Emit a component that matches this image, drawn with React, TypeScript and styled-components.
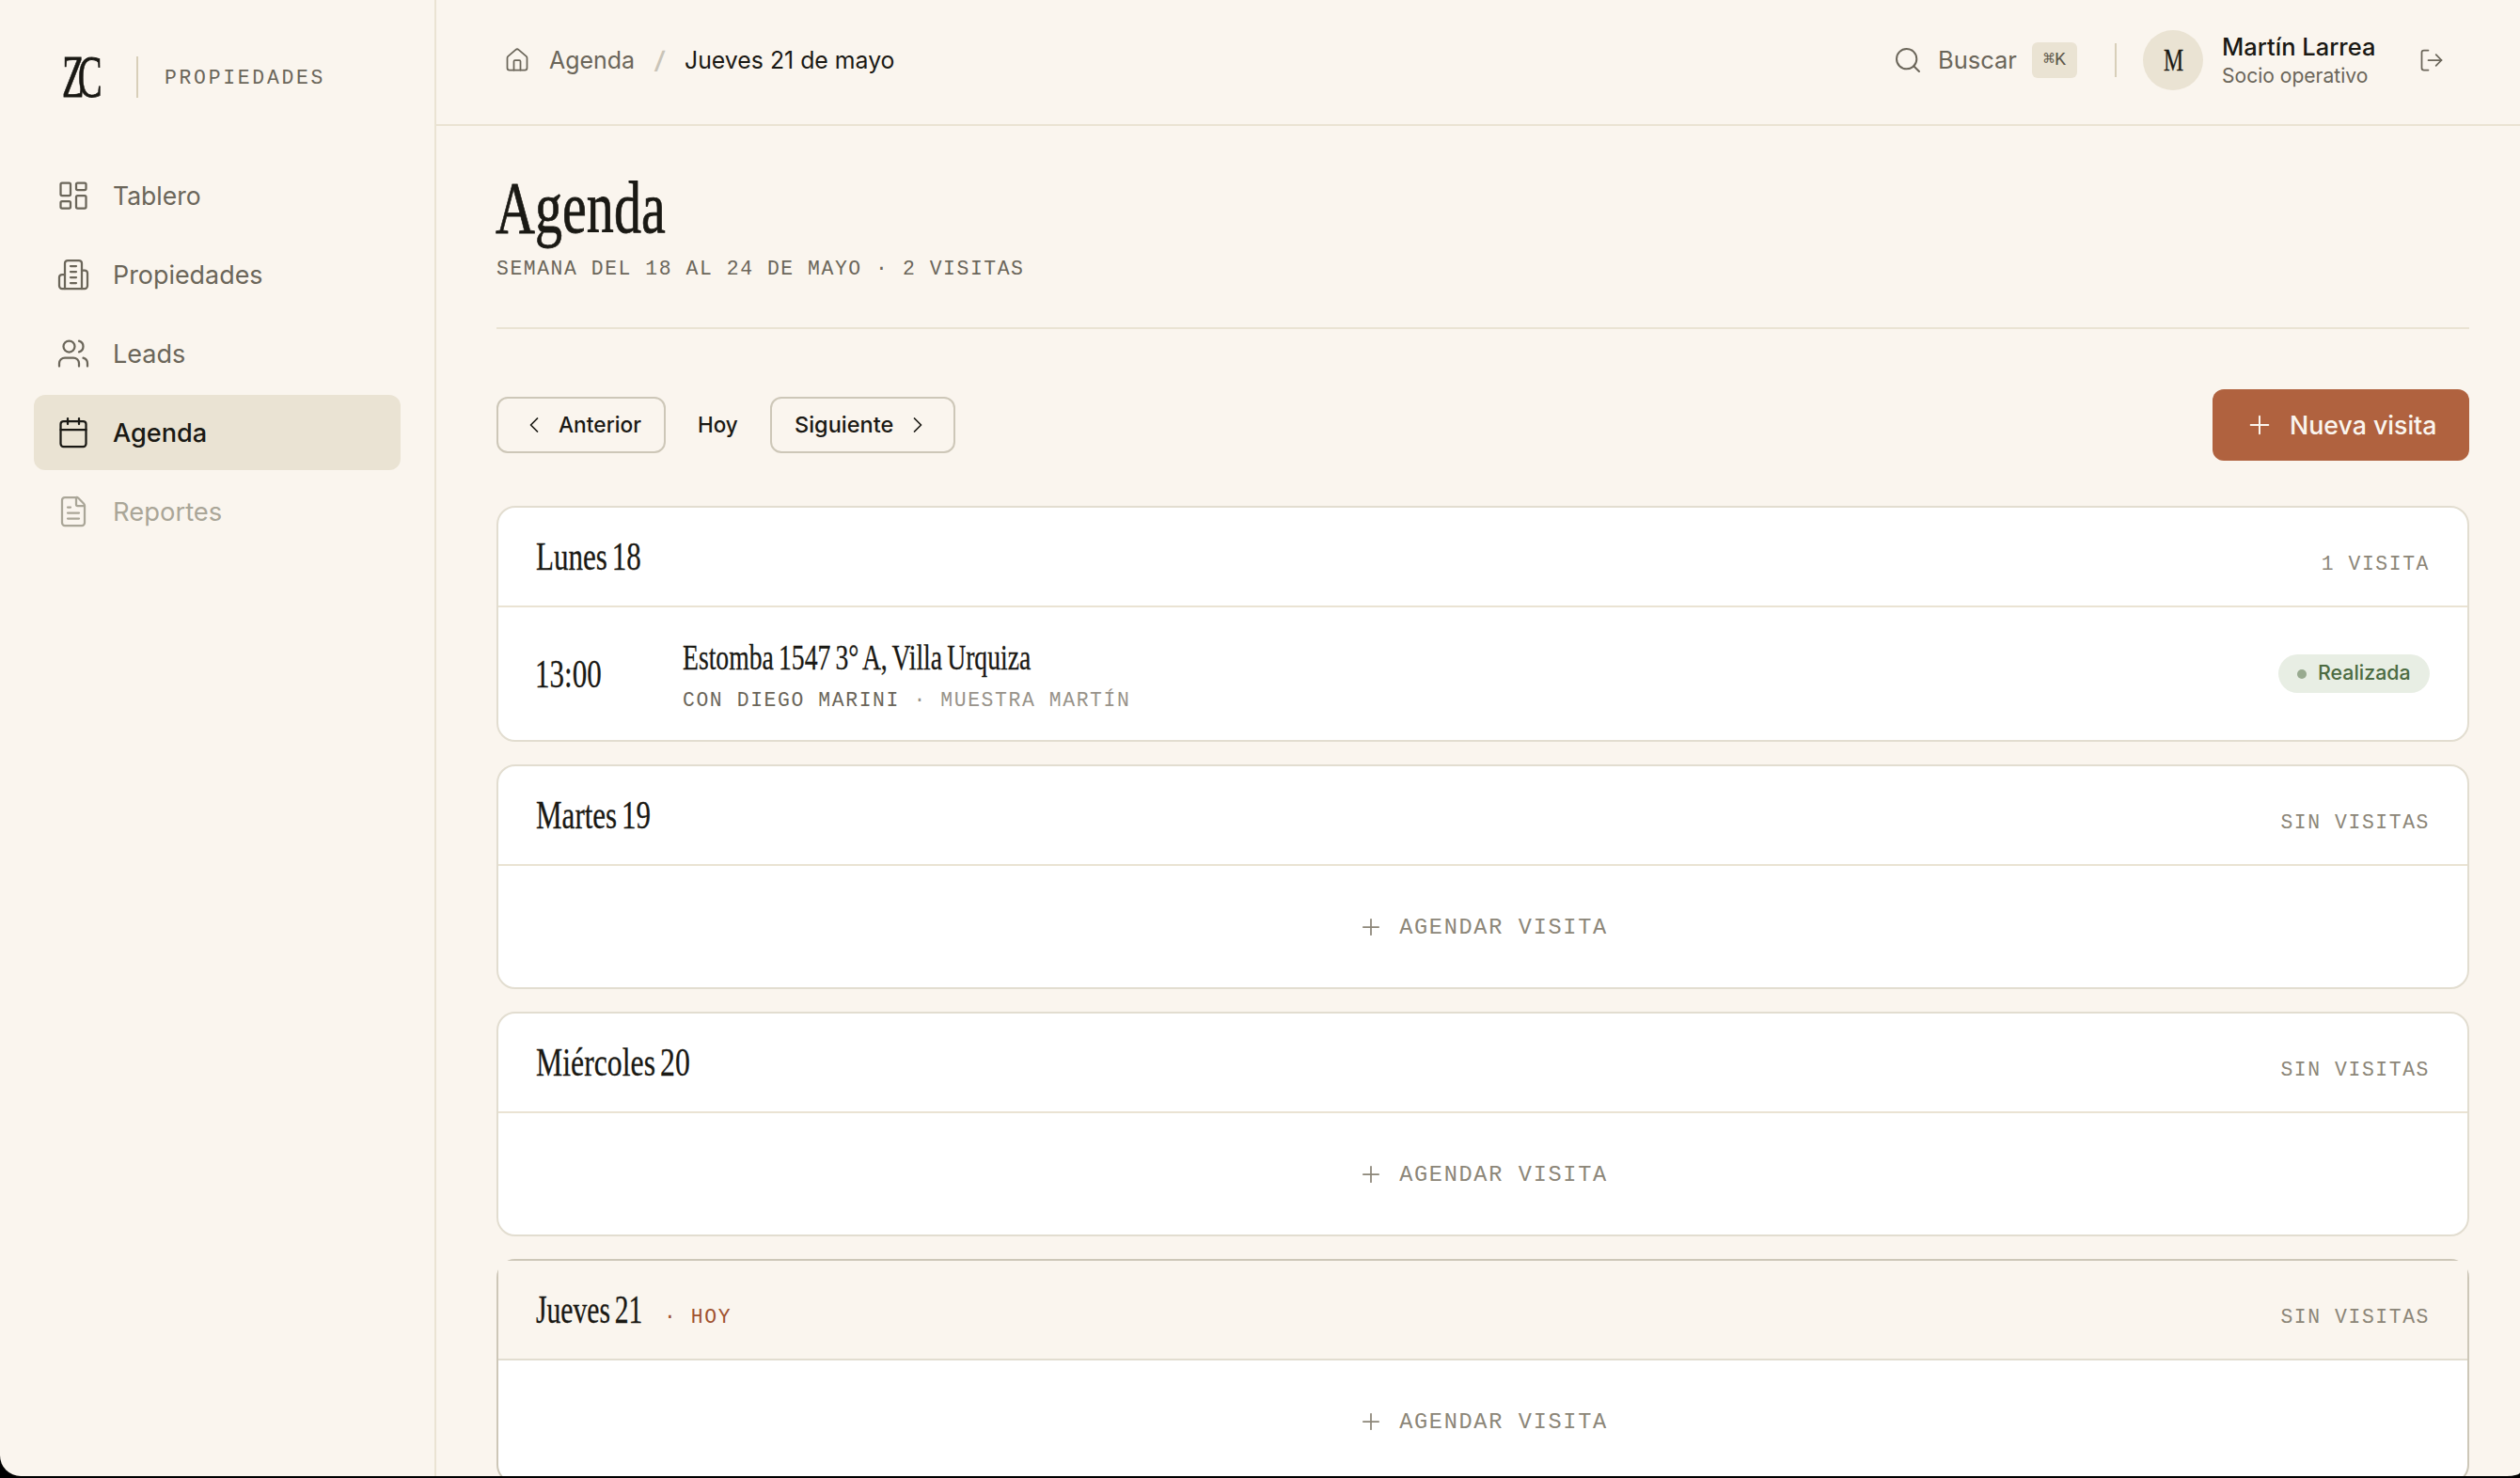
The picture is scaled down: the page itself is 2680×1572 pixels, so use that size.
import React, { useLayoutEffect, useRef, useState } from "react";
import styled, { createGlobalStyle, css } from "styled-components";
import {
  Calendar,
  ChevronLeft,
  ChevronRight,
  FileText,
  House,
  LayoutDashboard,
  LogOut,
  Plus,
  Search,
  Users,
} from "lucide-react";

const c = {
  paper: "#faf5ee",
  sand: "#eae3d3",
  line: "#e2ddd0",
  edge: "#cdc7b8",
  ink: "#1a1914",
  soft: "#6b665a",
  muted: "#8c8678",
  faint: "#aaa698",
  clay: "#b0623f",
};

const sans = css`
  font-family: Inter, "Liberation Sans", sans-serif;
`;
const serif = css`
  font-family: "Liberation Serif", "Times New Roman", serif;
`;
const mono = css`
  font-family: "Liberation Mono", "DejaVu Sans Mono", monospace;
`;

const Global = createGlobalStyle`
  * { box-sizing: border-box; }
  html, body { margin: 0; background: #000; overflow: hidden; }
  button { font: inherit; color: inherit; background: none; border: 0; padding: 0; margin: 0; }
  h1, h2, p { margin: 0; font-weight: 400; }
  svg { flex: none; display: block; }
`;

/* Condensed text: squeezes its glyphs horizontally to the set measure. */
const FitBox = styled.span<{ $w: number }>`
  display: inline-block;
  width: ${(p) => p.$w}px;
  flex: none;
  white-space: nowrap;
`;
const FitInner = styled.span`
  display: inline-block;
  transform-origin: 0 50%;
`;
function Fit({ w, children }: { w: number; children: React.ReactNode }) {
  const ref = useRef<HTMLSpanElement>(null);
  const [scale, setScale] = useState(1);
  useLayoutEffect(() => {
    if (ref.current && ref.current.offsetWidth) setScale(w / ref.current.offsetWidth);
  }, [w]);
  return (
    <FitBox $w={w}>
      <FitInner ref={ref} style={{ transform: `scaleX(${scale})` }}>
        {children}
      </FitInner>
    </FitBox>
  );
}

const Shell = styled.div`
  ${sans}
  display: grid;
  grid-template-columns: 464px 1fr;
  width: 2680px;
  height: 1570px;
  overflow: hidden;
  background: ${c.paper};
  color: ${c.ink};
  border-radius: 0 0 14px 22px / 0 0 4px 22px;
`;

const Sidebar = styled.aside`
  border-right: 2px solid ${c.sand};
  padding: 0 36px;
`;
const Brand = styled.div`
  display: flex;
  align-items: center;
  height: 168px;
  padding: 0 0 4px 30px;
`;
const Monogram = styled.div`
  ${serif}
  font-size: 64px;
  line-height: 64px;
  letter-spacing: -11.5px;
  width: 79px;
  height: 64px;
  white-space: nowrap;
  transform: scaleX(0.605);
  transform-origin: 0 50%;
  -webkit-text-stroke: 0.8px ${c.ink};
`;
const BrandRule = styled.div`
  width: 2px;
  height: 44px;
  margin-right: 28px;
  background: #d8cfb9;
`;
const BrandWord = styled.span`
  ${mono}
  padding-top: 2px;
  font-size: 21.4px;
  letter-spacing: 2.72px;
  color: ${c.soft};
`;
const Nav = styled.nav`
  display: flex;
  flex-direction: column;
  gap: 4px;
`;
const NavItem = styled.a<{ $state?: "active" | "off" }>`
  display: flex;
  align-items: center;
  gap: 24px;
  height: 80px;
  padding: 0 24px;
  border-radius: 12px;
  font-size: 27.4px;
  line-height: 40px;
  font-weight: ${(p) => (p.$state === "active" ? 500 : 400)};
  color: ${(p) => (p.$state === "active" ? c.ink : p.$state === "off" ? c.faint : c.soft)};
  background: ${(p) => (p.$state === "active" ? c.sand : "transparent")};
`;

const Main = styled.main`
  min-width: 0;
`;
const Topbar = styled.header`
  display: flex;
  align-items: center;
  justify-content: space-between;
  height: 134px;
  padding: 0 80px 4px 72px;
  border-bottom: 2px solid ${c.sand};
  font-size: 25.5px;
  line-height: 36px;
`;
const Group = styled.div<{ $gap: number }>`
  display: flex;
  align-items: center;
  gap: ${(p) => p.$gap}px;
  color: ${c.soft};
`;
const Slash = styled.span`
  color: #c9c4b8;
`;
const Current = styled.span`
  color: ${c.ink};
`;
const Kbd = styled.kbd`
  ${mono}
  display: flex;
  align-items: center;
  justify-content: center;
  width: 48px;
  height: 38px;
  border-radius: 6px;
  background: ${c.sand};
  font-size: 20px;
  line-height: 38px;
  color: #5f594c;
`;
const TopRule = styled.div`
  width: 2px;
  height: 36px;
  margin: 0 28px 0 40px;
  background: #d8cfb9;
`;
const Avatar = styled.div`
  ${serif}
  display: flex;
  align-items: center;
  justify-content: center;
  width: 64px;
  height: 64px;
  margin-right: 20px;
  border-radius: 50%;
  background: ${c.sand};
  font-size: 34px;
  line-height: 64px;
  color: ${c.ink};
  -webkit-text-stroke: 0.3px ${c.ink};
`;
const Person = styled.div`
  display: flex;
  flex-direction: column;
  width: 163px;
  margin-right: 46px;
`;
const PersonName = styled.div`
  height: 32px;
  line-height: 32px;
  font-weight: 500;
  color: ${c.ink};
`;
const PersonRole = styled.div`
  height: 28px;
  font-size: 21.6px;
  line-height: 28px;
`;

const Content = styled.div`
  padding: 0 54px 0 64px;
`;
const Heading = styled.div`
  height: 216px;
  padding-top: 47px;
  border-bottom: 2px solid ${c.sand};
`;
const Title = styled.h1`
  ${serif}
  font-size: 79px;
  line-height: 80px;
  height: 80px;
  margin-left: -1px;
  -webkit-text-stroke: 0.8px ${c.ink};
`;
const Subtitle = styled.p`
  ${mono}
  font-size: 21.4px;
  line-height: 28px;
  margin-top: 11px;
  letter-spacing: 1.56px;
  color: ${c.soft};
`;
const Toolbar = styled.div`
  display: flex;
  align-items: center;
  justify-content: space-between;
  height: 76px;
  margin: 64px 0 48px;
`;
const Pager = styled.div`
  display: flex;
  gap: 16px;
`;
const PagerButton = styled.button<{ $plain?: boolean }>`
  display: flex;
  align-items: center;
  gap: 12px;
  height: 60px;
  padding: 0 ${(p) => (p.$plain ? 16 : 24)}px;
  border: 2px solid ${(p) => (p.$plain ? "transparent" : c.edge)};
  border-radius: 12px;
  font-size: 23.5px;
  font-weight: 500;
  line-height: 32px;
`;
const Primary = styled.button`
  display: flex;
  align-items: center;
  gap: 16px;
  height: 76px;
  padding: 0 34px;
  border-radius: 12px;
  background: ${c.clay};
  color: ${c.paper};
  font-size: 27.4px;
  font-weight: 500;
  line-height: 40px;
`;
const Days = styled.div`
  display: flex;
  flex-direction: column;
  gap: 24px;
`;
const Card = styled.section<{ $today?: boolean }>`
  border: 2px solid ${(p) => (p.$today ? c.edge : c.line)};
  border-radius: 20px;
  background: #fff;
`;
const CardHead = styled.div<{ $today?: boolean }>`
  display: flex;
  align-items: baseline;
  height: 106px;
  padding: 24px 40px;
  border-bottom: 2px solid ${(p) => (p.$today ? c.line : c.sand)};
  background: ${(p) => (p.$today ? c.paper : "transparent")};
`;
const DayName = styled.h2`
  ${serif}
  font-size: 43px;
  line-height: 56px;
  word-spacing: -4px;
  -webkit-text-stroke: 0.3px ${c.ink};
`;
const Tag = styled.span<{ $today?: boolean }>`
  ${mono}
  font-size: 21.4px;
  letter-spacing: 1.58px;
  white-space: pre;
  color: ${(p) => (p.$today ? "#a0522f" : c.muted)};
  margin-left: ${(p) => (p.$today ? "23px" : "auto")};
`;
const AddVisit = styled.button`
  ${mono}
  display: flex;
  align-items: center;
  justify-content: center;
  gap: 16px;
  width: 100%;
  height: 129px;
  font-size: 23.6px;
  letter-spacing: 1.68px;
  color: ${c.muted};
`;
const AddLabel = styled.span`
  padding-top: 2px;
`;
const Visit = styled.div`
  display: flex;
  align-items: center;
  height: 141px;
  padding: 0 40px;
`;
const Hour = styled.div`
  ${serif}
  width: 156px;
  margin-left: -1px;
  font-size: 42px;
  line-height: 56px;
  -webkit-text-stroke: 0.3px ${c.ink};
`;
const VisitBody = styled.div`
  flex: 1;
  padding-left: 1px;
`;
const Place = styled.div`
  ${serif}
  height: 48px;
  font-size: 38px;
  line-height: 48px;
  word-spacing: -2.5px;
  -webkit-text-stroke: 0.3px ${c.ink};
`;
const Meta = styled.div`
  ${mono}
  margin-top: 8px;
  font-size: 21.4px;
  line-height: 28px;
  letter-spacing: 1.6px;
  color: #98938a;
`;
const Client = styled.span`
  color: ${c.soft};
`;
const Badge = styled.div`
  display: flex;
  align-items: center;
  gap: 12px;
  height: 41px;
  padding: 0 20px;
  border-radius: 21px;
  background: #e8eee4;
  color: #4c6b42;
  font-size: 21.6px;
  font-weight: 500;
  line-height: 31px;
`;
const BadgeLabel = styled.span`
  padding-bottom: 2px;
`;
const Dot = styled.i`
  width: 10px;
  height: 10px;
  border-radius: 50%;
  background: #98aa8f;
`;

const BuildingIcon = ({ size, strokeWidth }: { size: number; strokeWidth: number }) => (
  <svg
    width={size}
    height={size}
    viewBox="0 0 24 24"
    fill="none"
    stroke="currentColor"
    strokeWidth={strokeWidth}
    strokeLinecap="round"
    strokeLinejoin="round"
  >
    <path d="M6 22V4a2 2 0 0 1 2-2h8a2 2 0 0 1 2 2v18Z" />
    <path d="M6 12H4a2 2 0 0 0-2 2v6a2 2 0 0 0 2 2h2" />
    <path d="M18 9h2a2 2 0 0 1 2 2v9a2 2 0 0 1-2 2h-2" />
    <path d="M10 6h4M10 10h4M10 14h4M10 18h4" />
  </svg>
);

const nav = [
  { label: "Tablero", w: 94, Icon: LayoutDashboard },
  { label: "Propiedades", w: 160, Icon: BuildingIcon },
  { label: "Leads", w: 77, Icon: Users },
  { label: "Agenda", w: 100, Icon: Calendar, state: "active" as const },
  { label: "Reportes", w: 116, Icon: FileText, state: "off" as const },
];

type Day = { name: string; w: number; count: string; today?: boolean; visit?: boolean };
const days: Day[] = [
  { name: "Lunes 18", w: 112, count: "1 VISITA", visit: true },
  { name: "Martes 19", w: 122, count: "SIN VISITAS" },
  { name: "Miércoles 20", w: 164, count: "SIN VISITAS" },
  { name: "Jueves 21", w: 113, count: "SIN VISITAS", today: true },
];

export default function App() {
  return (
    <>
      <Global />
      <Shell>
        <Sidebar>
          <Brand>
            <Monogram>ZC</Monogram>
            <BrandRule />
            <BrandWord>PROPIEDADES</BrandWord>
          </Brand>
          <Nav>
            {nav.map(({ label, w, Icon, state }) => (
              <NavItem key={label} $state={state}>
                <Icon size={36} strokeWidth={1.5} />
                <Fit w={w}>{label}</Fit>
              </NavItem>
            ))}
          </Nav>
        </Sidebar>
        <Main>
          <Topbar>
            <Group $gap={20}>
              <House size={28} strokeWidth={1.5} />
              <Fit w={91}>Agenda</Fit>
              <Slash>
                <Fit w={13}>/</Fit>
              </Slash>
              <Current>
                <Fit w={224}>Jueves 21 de mayo</Fit>
              </Current>
            </Group>
            <Group $gap={0}>
              <Group $gap={16}>
                <Search size={32} strokeWidth={1.5} />
                <Fit w={84}>Buscar</Fit>
                <Kbd>
                  <Fit w={24}>⌘K</Fit>
                </Kbd>
              </Group>
              <TopRule />
              <Avatar>
                <Fit w={21}>M</Fit>
              </Avatar>
              <Person>
                <PersonName>
                  <Fit w={163}>Martín Larrea</Fit>
                </PersonName>
                <PersonRole>
                  <Fit w={155}>Socio operativo</Fit>
                </PersonRole>
              </Person>
              <LogOut size={28} strokeWidth={1.5} />
            </Group>
          </Topbar>
          <Content>
            <Heading>
              <Title>
                <Fit w={181}>Agenda</Fit>
              </Title>
              <Subtitle>SEMANA DEL 18 AL 24 DE MAYO · 2 VISITAS</Subtitle>
            </Heading>
            <Toolbar>
              <Pager>
                <PagerButton>
                  <ChevronLeft size={28} strokeWidth={1.5} />
                  <Fit w={88}>Anterior</Fit>
                </PagerButton>
                <PagerButton $plain>
                  <Fit w={43}>Hoy</Fit>
                </PagerButton>
                <PagerButton>
                  <Fit w={105}>Siguiente</Fit>
                  <ChevronRight size={28} strokeWidth={1.5} />
                </PagerButton>
              </Pager>
              <Primary>
                <Plus size={32} strokeWidth={1.5} />
                <Fit w={157}>Nueva visita</Fit>
              </Primary>
            </Toolbar>
            <Days>
              {days.map((d) => (
                <Card key={d.name} $today={d.today}>
                  <CardHead $today={d.today}>
                    <DayName>
                      <Fit w={d.w}>{d.name}</Fit>
                    </DayName>
                    {d.today && <Tag $today>· HOY</Tag>}
                    <Tag>{d.count}</Tag>
                  </CardHead>
                  {d.visit ? (
                    <Visit>
                      <Hour>
                        <Fit w={71}>13:00</Fit>
                      </Hour>
                      <VisitBody>
                        <Place>
                          <Fit w={370}>Estomba 1547 3° A, Villa Urquiza</Fit>
                        </Place>
                        <Meta>
                          <Client>CON DIEGO MARINI</Client> · MUESTRA MARTÍN
                        </Meta>
                      </VisitBody>
                      <Badge>
                        <Dot />
                        <BadgeLabel>
                          <Fit w={99}>Realizada</Fit>
                        </BadgeLabel>
                      </Badge>
                    </Visit>
                  ) : (
                    <AddVisit>
                      <Plus size={28} strokeWidth={1.5} />
                      <AddLabel>AGENDAR VISITA</AddLabel>
                    </AddVisit>
                  )}
                </Card>
              ))}
            </Days>
          </Content>
        </Main>
      </Shell>
    </>
  );
}
